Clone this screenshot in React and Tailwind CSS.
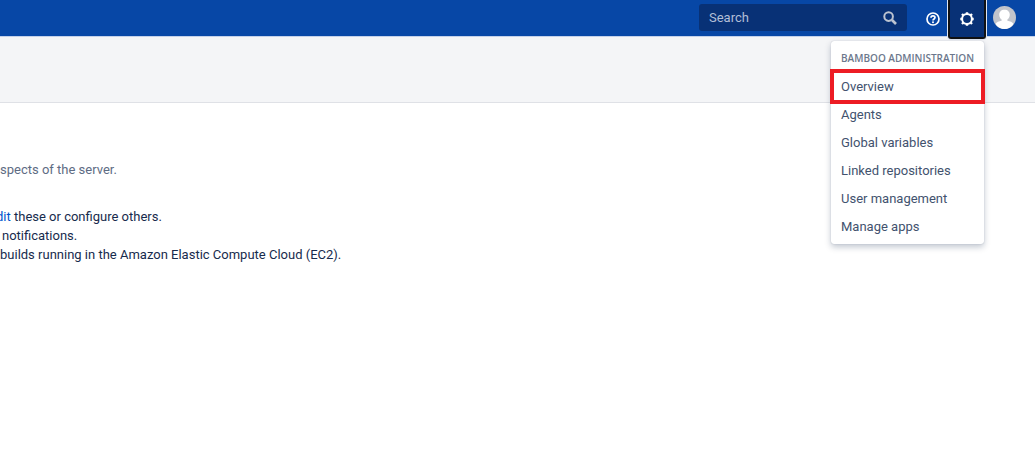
const menuItems = [
  "Overview",
  "Agents",
  "Global variables",
  "Linked repositories",
  "User management",
  "Manage apps",
];

function SearchIcon() {
  return (
    <svg viewBox="0 0 14 14" className="size-[14px]" fill="none" stroke="#bcc3d0" aria-hidden="true">
      <circle cx="5.6" cy="5.6" r="4.3" strokeWidth="2" />
      <path d="M9 9l4 4" strokeWidth="2.6" />
    </svg>
  );
}

function HelpIcon() {
  return (
    <svg viewBox="0 0 14 14" className="size-[14px]" fill="none" stroke="#fff" aria-hidden="true">
      <circle cx="7" cy="7" r="6" strokeWidth="1.7" />
      <path d="M5 5.8C5 4.5 5.8 3.9 7 3.9s2 .7 2 1.7c0 1.4-2 1.4-2 2.9" strokeWidth="1.7" />
      <circle cx="7" cy="10.2" r="1" fill="#fff" stroke="none" />
    </svg>
  );
}

function GearIcon() {
  return (
    <svg viewBox="0 0 14 14" className="size-[14px]" fill="none" stroke="#fff" aria-hidden="true">
      <circle cx="7" cy="7" r="4.9" strokeWidth="2" />
      <path
        d="M7 .3v2M7 11.7v2M.3 7h2M11.7 7h2M2 2l1.5 1.5M10.5 10.5l1.5 1.5M2 12l1.5-1.5M10.5 3.5l1.5-1.5"
        strokeWidth="2.4"
      />
    </svg>
  );
}

function Avatar() {
  return (
    <svg viewBox="0 0 24 24" className="size-[23px]" aria-hidden="true">
      <defs>
        <clipPath id="avatar-disc">
          <circle cx="12" cy="12" r="12" />
        </clipPath>
      </defs>
      <g clipPath="url(#avatar-disc)">
        <rect width="24" height="24" fill="#c1c4cb" />
        <path
          d="M12 4C8.5 4 6.5 6.2 6.5 9.2c0 2.3 1 4 2.5 5v1.3c-3 .5-5.2 1.4-6.4 3.2C5 22 8 24 12 24s7-2 9.4-5.3c-1.2-1.8-3.4-2.7-6.4-3.2v-1.3c1.5-1 2.5-2.7 2.5-5C17.5 6.2 15.5 4 12 4z"
          fill="#fff"
        />
      </g>
    </svg>
  );
}

function AdminMenu() {
  return (
    <nav
      aria-label="Bamboo administration"
      className="absolute right-[2px] top-[41px] z-10 w-[153px] rounded-[3px] bg-white py-[3px] shadow-[0_3px_6px_rgba(9,30,66,0.25),0_0_1px_rgba(9,30,66,0.3)]"
    >
      <h2 className="flex h-7 items-center whitespace-nowrap pl-[10px] font-['Open_Sans',sans-serif] text-[10px] font-semibold text-[#6b778c]">
        BAMBOO ADMINISTRATION
      </h2>
      <ul className="pt-px">
        {menuItems.map((item, index) => (
          <li key={item} className="relative">
            <a href="#" className="flex h-7 items-center whitespace-nowrap px-[10px] text-[#42526e]">
              {item}
            </a>
            {index === 0 && (
              <span className="pointer-events-none absolute -inset-x-px -bottom-[3px] -top-1 border-4 border-[#ed1c24]" />
            )}
          </li>
        ))}
      </ul>
    </nav>
  );
}

export default function App() {
  return (
    <div className="min-h-screen bg-white font-[Roboto,'Open_Sans',sans-serif] text-[13px] text-[#172b4d]">
      <header className="flex h-[37px] items-start justify-end border-b border-[#c3d1ea] bg-[#0747a6] bg-clip-padding pr-[19px]">
        <form role="search" className="mt-1 flex h-[27px] w-52 items-center rounded-[3px] bg-[#083176] px-[10px]">
          <input
            type="text"
            aria-label="Search"
            placeholder="Search"
            className="min-w-0 flex-1 bg-transparent outline-none placeholder:text-[#b2bfd6] placeholder:opacity-100"
          />
          <button type="button" aria-label="Submit search">
            <SearchIcon />
          </button>
        </form>
        <button type="button" aria-label="Help" className="ml-[19px] mt-3">
          <HelpIcon />
        </button>
        <div className="relative ml-2">
          <button
            type="button"
            aria-label="Administration"
            aria-expanded="true"
            className="flex h-[39px] w-[38px] items-center justify-center rounded-b-[3px] border-x-2 border-b-2 border-[#101114] bg-[#083176] shadow-[0_0_0_1px_#dfe6f2]"
          >
            <GearIcon />
          </button>
          <AdminMenu />
        </div>
        <button type="button" aria-label="Profile" className="ml-[7px] mt-[6px]">
          <Avatar />
        </button>
      </header>
      <div className="h-[66px] border-b border-[#dfe1e6] bg-[#f4f5f7]" />
      <main className="overflow-hidden whitespace-nowrap pt-[57px] leading-[19px]">
        <p className="text-[#5e6c84]">spects of the server.</p>
        <ul className="mt-7">
          <li className="-ml-1">
            <a href="#" className="text-[#0052cc]">dit</a> these or configure others.
          </li>
          <li className="pl-[2px]">notifications.</li>
          <li>builds running in the Amazon Elastic Compute Cloud (EC2).</li>
        </ul>
      </main>
    </div>
  );
}
